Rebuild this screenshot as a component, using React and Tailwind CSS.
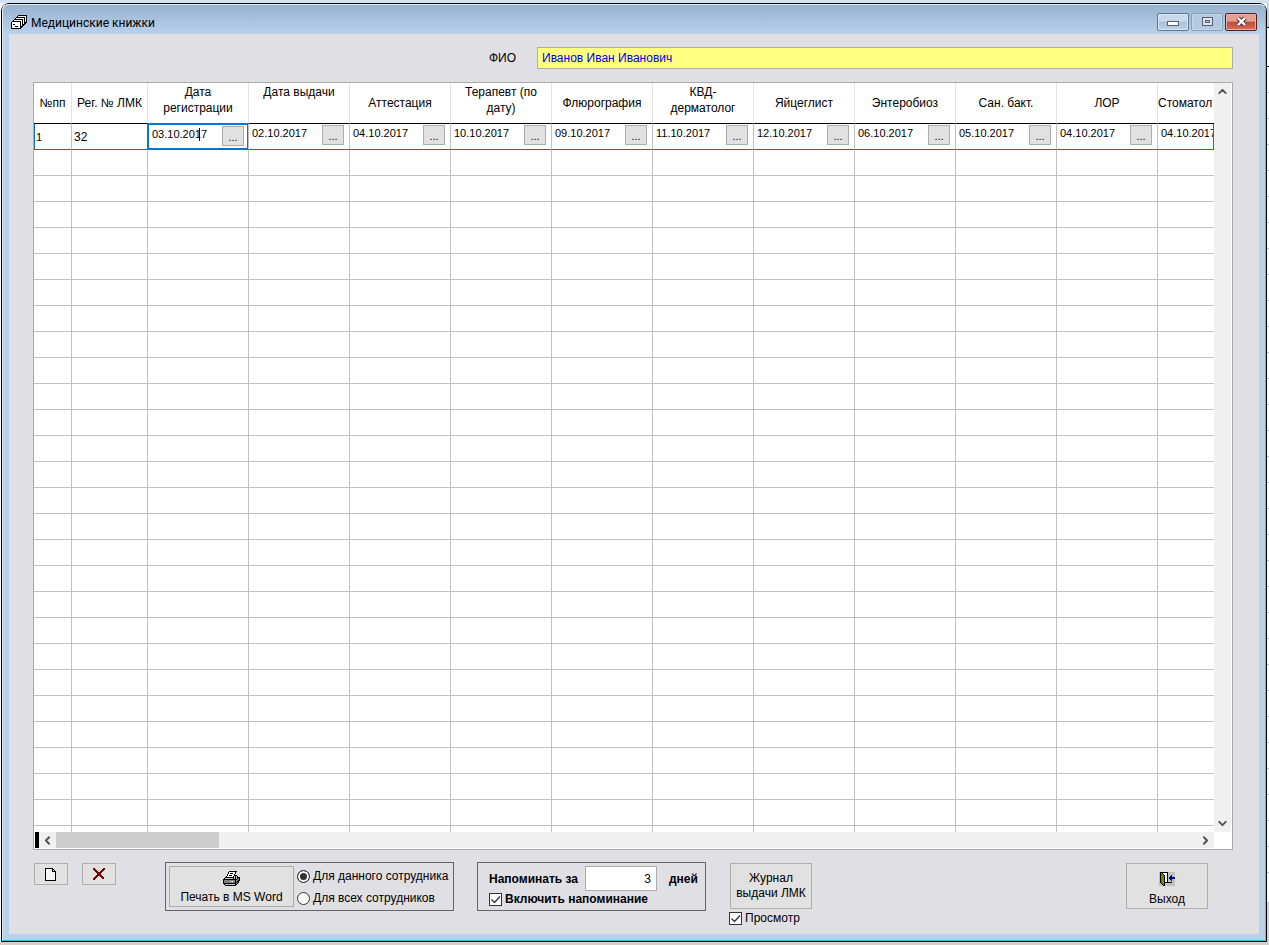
import { useState } from "react";
import { ChevronDown, ChevronLeft, ChevronRight, ChevronUp } from "lucide-react";

const columns = [
  { title: "Дата регистрации", date: "03.10.2017", top: true },
  { title: "Дата выдачи", date: "02.10.2017", top: true },
  { title: "Аттестация", date: "04.10.2017" },
  { title: "Терапевт (по дату)", date: "10.10.2017", top: true },
  { title: "Флюрография", date: "09.10.2017" },
  { title: "КВД- дерматолог", date: "11.10.2017", top: true },
  { title: "Яйцеглист", date: "12.10.2017" },
  { title: "Энтеробиоз", date: "06.10.2017" },
  { title: "Сан. бакт.", date: "05.10.2017" },
  { title: "ЛОР", date: "04.10.2017" },
  { title: "Стоматол", date: "04.10.2017" },
];

const EMPTY_ROWS = 27;

const palette = {
  K: "#000000",
  W: "#ffffff",
  G: "#c0c0c0",
  D: "#808080",
  Y: "#808000",
  B: "#000090",
  R: "#800000",
};

const cardsIcon = [
  ".......KKKKKKKKK",
  "......KWWWWWWWWK",
  ".....KKKKKKKKKWK",
  "....KWWWWWWWWKWK",
  "...KKKKKKKKKWKWK",
  "..KWWWWWWWWKWKWK",
  ".KKKKKKKKKWKWKWK",
  "KWWWWWWWWKWKWKKK",
  "KWWWWWWWWKWKWKK.",
  "KWKKWWWWWKWKKK..",
  "KWWWWWWWWKWKK...",
  "KWWWKKKWWKKK....",
  "KWWWWWWWWKK.....",
  "KKKKKKKKKK......",
];

const printerIcon = [
  "......KKKKKKKK...",
  ".....KWWWWWWK....",
  ".....KWKKKWWK....",
  "....KWWWWWWK.....",
  "....KWKKKWWKKK...",
  "...KWWWWWWKGKGK..",
  "..KKKKKKKKKGKGKKK",
  ".KGGGGGGGGKGKGKDK",
  "KKKKKKKKKKKKKKDDK",
  "KDDDDDDDDDDDKDDKK",
  "KDDDDDDGGWDDKDKK.",
  "KDDDDDDDDDDDKKDK.",
  "KKKKKKKKKKKKKDK..",
  ".KGGGGGGGGGGKK...",
  "..KKKKKKKKKKK....",
];

const exitIcon = [
  "GKKKKKKKKGGGGGGG",
  "GKYKWWWWKGGGGGGG",
  "GKYYKWWWKGGGGGGG",
  "GKYYYKWWKGGGBGGG",
  "GKYYYKWWKGGBBGGG",
  "GKYYYKWWKGBBBBBB",
  "GKYYYKWWKGBBBBBB",
  "GKYYYKWWKGGBBGGG",
  "GKYYYKWWKGGGBGGG",
  "GKYYYKWWKGGGGGGG",
  "GKYYYKKKKKKKKGGG",
  "GGKYYKGGGGGGGGGG",
  "GGGKYKGGGGGGGGGG",
  "GGGGKKGGGGGGGGGG",
];

const crossIcon = [
  "RR........RR",
  "RRR......RRR",
  ".RRR....RRR.",
  "..RRR..RRR..",
  "...RRRRRR...",
  "....RRRR....",
  "....RRRR....",
  "...RRRRRR...",
  "..RRR..RRR..",
  ".RRR....RRR.",
  "RRR......RR.",
  "RR..........",
];

function PixelIcon({ rows }) {
  return (
    <svg width={rows[0].length} height={rows.length} shapeRendering="crispEdges" aria-hidden="true">
      {rows.flatMap((row, y) =>
        [...row].map((c, x) =>
          c === "." ? null : <rect key={`${x}-${y}`} x={x} y={y} width="1" height="1" fill={palette[c]} />
        )
      )}
    </svg>
  );
}

function TitleButton({ label, danger, faded, children }) {
  return (
    <button
      type="button"
      aria-label={label}
      className={`flex h-[18px] w-8 items-center justify-center rounded-[2px] border ${
        danger
          ? "border-[#5b1b22] bg-linear-to-b from-[#e2a091] from-45% via-[#c04a35] via-50% to-[#d5705a] shadow-[inset_0_0_0_1px_#e8b0a4]"
          : faded
            ? "border-[#8aa0b8] bg-[#b3cae2] shadow-[inset_0_0_0_1px_#c2d5e9]"
            : "border-[#5f7690] bg-linear-to-b from-[#c9d9ea] from-45% via-[#a9c0d8] via-50% to-[#bdd2e8] shadow-[inset_0_0_0_1px_#dbe7f3]"
      }`}
    >
      {children}
    </button>
  );
}

function TitleBar() {
  return (
    <header className="flex h-[29px] shrink-0 items-center gap-1 rounded-t-md bg-linear-to-b from-[#98b3d0] to-[#b9d1ec] pt-1 pr-2 pl-2">
      <PixelIcon rows={cardsIcon} />
      <h1 className="flex-1 pt-0.5 font-[Roboto,'Noto_Sans',sans-serif] text-xs leading-4">Медицинские книжки</h1>
      <div className="flex gap-0.5">
        <TitleButton label="Свернуть">
          <svg className="mt-1" width="12" height="5" shapeRendering="crispEdges">
            <rect x="0.5" y="0.5" width="11" height="4" fill="#fff" stroke="#56606c" />
          </svg>
        </TitleButton>
        <TitleButton label="Развернуть" faded>
          <svg width="11" height="9" shapeRendering="crispEdges">
            <rect x="0.5" y="0.5" width="10" height="8" fill="#dce5ee" stroke="#56606c" />
            <rect x="3.5" y="3.5" width="4" height="2" fill="#b3cae2" stroke="#56606c" />
          </svg>
        </TitleButton>
        <TitleButton label="Закрыть" danger>
          <svg width="13" height="11" viewBox="0 0 13 11">
            <path d="M3 2l7 7M10 2l-7 7" stroke="#5c3440" strokeWidth="4.5" />
            <path d="M3 2l7 7M10 2l-7 7" stroke="#fff" strokeWidth="2.4" />
          </svg>
        </TitleButton>
      </div>
    </header>
  );
}

function DateCell({ value, title, active, last }) {
  return (
    <td
      className={`border-r border-b border-b-[#0f6fc0] border-r-[#c0c0c0] p-0 align-top ${
        active ? "shadow-[inset_0_0_0_1px_#0078d7,-1px_-1px_0_0_#0078d7]" : ""
      }`}
    >
      <div className={`relative flex items-start justify-between ${active ? "pt-0.5 pr-1 pl-1" : "pt-px pr-[5px] pl-[3px]"}`}>
        <input
          type="text"
          aria-label={title}
          defaultValue={value}
          className="h-4 w-16 min-w-0 bg-transparent text-[11px] leading-4 outline-none"
        />
        {active && <span className="absolute top-1 left-[51px] h-[13px] w-px bg-black" />}
        {!last && (
          <button
            type="button"
            aria-label={`Выбрать дату: ${title}`}
            className="h-5 w-[22px] shrink-0 border border-[#adadad] bg-[#e1e1e1] text-[11px] leading-5"
          >
            ...
          </button>
        )}
      </div>
    </td>
  );
}

function Grid() {
  return (
    <table className="w-[1225px] table-fixed border-separate border-spacing-0">
      <colgroup>
        <col className="w-[38px]" />
        <col className="w-[76px]" />
        {columns.map((c) => (
          <col key={c.title} className="w-[101px]" />
        ))}
      </colgroup>
      <thead>
        <tr className="h-[41px] text-xs leading-4">
          <th className="border-r border-b border-r-[#e3e3e3] border-b-black p-0 font-normal">№пп</th>
          <th className="border-r border-b border-r-[#e3e3e3] border-b-black p-0 font-normal">Рег. № ЛМК</th>
          {columns.map((c, i) => (
            <th
              key={c.title}
              className={`border-r border-b border-r-[#e3e3e3] border-b-black font-normal ${
                c.top ? "px-1 pt-px align-top" : "p-0"
              } ${i === columns.length - 1 ? "text-left" : ""}`}
            >
              {c.title}
            </th>
          ))}
        </tr>
      </thead>
      <tbody>
        <tr className="h-[26px]">
          <td className="border-r border-b border-l border-r-[#c0c0c0] border-b-[#0f6fc0] border-l-[#0f6fc0] p-0 pl-px text-[11px] leading-4">
            1
          </td>
          <td className="border-r border-b border-r-[#c0c0c0] border-b-[#0f6fc0] p-0 pl-0.5 text-xs leading-4">32</td>
          {columns.map((c, i) => (
            <DateCell key={c.title} value={c.date} title={c.title} active={i === 0} last={i === columns.length - 1} />
          ))}
        </tr>
        {Array.from({ length: EMPTY_ROWS }, (_, r) => (
          <tr key={r} className="h-[26px]">
            {Array.from({ length: columns.length + 2 }, (_, c) => (
              <td key={c} className="border-r border-b border-[#c0c0c0] p-0" />
            ))}
          </tr>
        ))}
      </tbody>
    </table>
  );
}

function ScrollArrow({ icon: Icon, label }) {
  return (
    <button type="button" aria-label={label} className="flex size-[17px] shrink-0 items-center justify-center text-[#505050]">
      <Icon size={13} strokeWidth={3.5} />
    </button>
  );
}

function DataPanel() {
  return (
    <section className="flex min-h-0 flex-1 flex-col border border-[#a9a9b0] bg-white">
      <div className="flex min-h-0 flex-1">
        <div className="relative min-w-0 flex-1 overflow-hidden">
          <Grid />
          {/* right edge of the selected row */}
          <span className="absolute top-[41px] right-0 h-[26px] w-px bg-[#0f6fc0]" />
        </div>
        <div className="flex w-[17px] shrink-0 flex-col justify-between bg-[#f0f0f0]">
          <ScrollArrow icon={ChevronUp} label="Вверх" />
          <ScrollArrow icon={ChevronDown} label="Вниз" />
        </div>
        <div className="w-px shrink-0" />
      </div>
      <div className="flex h-[17px] shrink-0 pr-[18px] pl-px">
        <div className="h-4 w-1 bg-black" />
        <div className="flex h-4 min-w-0 flex-1 bg-[#f0f0f0]">
          <ScrollArrow icon={ChevronLeft} label="Влево" />
          <div className="w-[163px] bg-[#cdcdcd]" />
          <div className="flex-1" />
          <ScrollArrow icon={ChevronRight} label="Вправо" />
        </div>
      </div>
    </section>
  );
}

function Check({ label, checked, onChange, bold }) {
  return (
    <label className={`flex items-center gap-[3px] text-xs leading-4 ${bold ? "font-bold" : ""}`}>
      <span className="relative flex size-[13px]">
        <input
          type="checkbox"
          checked={checked}
          onChange={(e) => onChange(e.target.checked)}
          className="size-[13px] appearance-none border border-[#333333] bg-white"
        />
        {checked && (
          <svg className="pointer-events-none absolute inset-0" width="13" height="13" viewBox="0 0 13 13" fill="none">
            <path d="M2.5 6.5l3 3 5.5-6" stroke="#333333" strokeWidth="1.3" />
          </svg>
        )}
      </span>
      {label}
    </label>
  );
}

function Radio({ label, value, current, onChange }) {
  return (
    <label className="flex items-center gap-[3px] text-xs leading-4 whitespace-nowrap">
      <input
        type="radio"
        name="scope"
        value={value}
        checked={current === value}
        onChange={() => onChange(value)}
        className="size-[13px] appearance-none rounded-full border border-[#333333] bg-white checked:bg-[#333333] checked:shadow-[inset_0_0_0_2px_white]"
      />
      {label}
    </label>
  );
}

const buttonClass = "border border-[#adadad] bg-[#e1e1e1] text-xs";

function Footer() {
  const [scope, setScope] = useState("one");
  const [remind, setRemind] = useState(true);
  const [preview, setPreview] = useState(true);

  return (
    <footer className="flex h-[84px] shrink-0 items-start pt-3 pr-[25px]">
      <div className="flex gap-3.5 pt-px pl-px">
        <button type="button" aria-label="Новая запись" className={`flex h-[22px] w-[34px] items-center justify-center ${buttonClass}`}>
          <svg width="12" height="13" viewBox="0 0 12 13" shapeRendering="crispEdges">
            <path d="M0.5 0.5H7.5V3.5H10.5V12.5H0.5z" fill="#f4f4f4" />
            <path d="M7.5 0.5H0.5V12.5H10.5V3.5H7.5V0.5M8 1.5h1M9 2.5h1" fill="none" stroke="#000" />
          </svg>
        </button>
        <button type="button" aria-label="Удалить запись" className={`flex h-[22px] w-[34px] items-center justify-center ${buttonClass}`}>
          <PixelIcon rows={crossIcon} />
        </button>
      </div>

      <div className="ml-[49px] flex h-[49px] items-start gap-[3px] border border-[#646469] p-[3px] pr-0.5">
        <button type="button" className={`flex h-[41px] w-[125px] flex-col items-center justify-between pt-1 pb-px leading-4 ${buttonClass}`}>
          <PixelIcon rows={printerIcon} />
          <span>Печать в MS Word</span>
        </button>
        <div className="flex w-[154px] flex-col gap-1.5 pt-0.5">
          <Radio label="Для данного сотрудника" value="one" current={scope} onChange={setScope} />
          <Radio label="Для всех сотрудников" value="all" current={scope} onChange={setScope} />
        </div>
      </div>

      <div className="ml-[23px] flex h-[49px] w-[229px] flex-col border border-[#646469] pt-[3px] pl-[11px] text-xs leading-4">
        <div className="flex items-center">
          <label htmlFor="days" className="w-24 font-bold">
            Напоминать за
          </label>
          <input
            id="days"
            type="text"
            defaultValue="3"
            className="h-[25px] w-[72px] border border-[#abadb3] bg-white pr-[5px] text-right outline-none"
          />
          <span className="pl-3 font-bold">дней</span>
        </div>
        <Check label="Включить напоминание" checked={remind} onChange={setRemind} bold />
      </div>

      <div className="ml-[23px] flex flex-col gap-px pt-px">
        <button type="button" className={`ml-px h-[46px] w-[82px] leading-[15px] ${buttonClass}`}>
          Журнал выдачи ЛМК
        </button>
        <Check label="Просмотр" checked={preview} onChange={setPreview} />
      </div>

      <button type="button" className={`mt-px ml-auto flex h-[46px] w-[82px] flex-col items-center gap-[5px] pt-2 leading-4 ${buttonClass}`}>
        <PixelIcon rows={exitIcon} />
        <span>Выход</span>
      </button>
    </footer>
  );
}

// sliver of the application that stays visible to the right of the window
function BackdropEdge() {
  return (
    <div className="flex w-0.5 shrink-0 flex-col bg-white">
      <div className="h-6 bg-[#d4d0c8]" />
      <div className="h-10 border-t border-b border-black" />
      <div className="flex flex-1 flex-col overflow-hidden">
        {Array.from({ length: 31 }, (_, i) => (
          <div key={i} className="h-[26px] shrink-0 border-b border-[#c0c0c0]" />
        ))}
      </div>
      <div className="h-10 bg-[#d4d0c8]" />
    </div>
  );
}

export default function App() {
  return (
    <div className="flex h-screen flex-col bg-[#d4d0c8] font-['Liberation_Sans',Arial,sans-serif] text-black">
      <div className="h-[3px] shrink-0 bg-[#d3e2f3]" />
      <div className="flex min-h-0 flex-1 bg-white pl-px">
        <main className="flex min-w-0 flex-1 flex-col rounded-t-lg border border-black bg-[#b9d1ea]">
          <div className="flex min-h-0 flex-1 flex-col rounded-t-md border border-t-[#dfeaf5] border-r-[#35cfe8] border-b-[#12c4e8] border-l-[#dfeaf5]">
            <TitleBar />
            <div className="mx-1.5 mb-1.5 flex min-h-0 flex-1 flex-col bg-[#e0dfe4] pr-[26px] pl-6">
              <div className="flex shrink-0 items-center justify-end gap-[21px] pt-[13px] pb-[13px] text-xs leading-4">
                <label htmlFor="fio">ФИО</label>
                <input
                  id="fio"
                  type="text"
                  defaultValue="Иванов Иван Иванович"
                  className="h-[22px] w-[58%] border border-[#a9acb4] bg-[#ffff80] pl-1 text-[#0000e0] outline-none"
                />
              </div>
              <DataPanel />
              <Footer />
            </div>
          </div>
        </main>
        <BackdropEdge />
      </div>
      <div className="h-[3px] shrink-0" />
    </div>
  );
}
